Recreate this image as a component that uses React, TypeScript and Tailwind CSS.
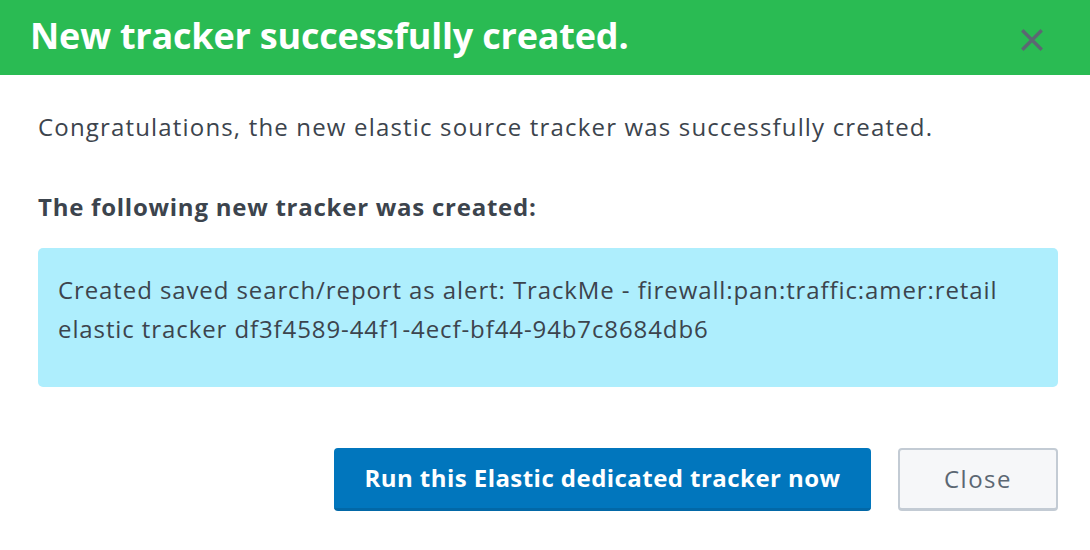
import React from "react";

export default function App() {
  return (
    <div className="w-[1090px] h-[550px] bg-white overflow-hidden" style={{ fontFamily: "'Open Sans', sans-serif" }}>
      <div className="h-[75px] bg-[#2abb53] flex items-center justify-between pl-[30px] pr-[47px]">
        <h1 className="text-white font-bold text-[36px] leading-none tracking-[-0.2px] mb-[3px]">New tracker successfully created.</h1>
        <svg width="22" height="22" viewBox="0 0 22 22" className="mt-[4px]">
          <path d="M2.5 2.5 L19.5 19.5 M19.5 2.5 L2.5 19.5" stroke="#5c6773" strokeWidth="3.4" strokeLinecap="square" />
        </svg>
      </div>
      <div className="pl-[38px] pr-[32px] text-[#3c444d]">
        <p className="text-[24px] leading-[30px] tracking-[1.17px] mt-[37px]">Congratulations, the new elastic source tracker was successfully created.</p>
        <p className="text-[24px] leading-[30px] tracking-[0.75px] font-bold mt-[50px]">The following new tracker was created:</p>
        <div className="mt-[26px] h-[139px] bg-[#aeeefd] rounded-[5px] px-[20px] pt-[22px] text-[24px] leading-[39px] tracking-[0.9px]">
          Created saved search/report as alert: TrackMe - firewall:pan:traffic:amer:retail elastic tracker df3f4589-44f1-4ecf-bf44-94b7c8684db6
        </div>
        <div className="flex justify-end gap-[27px] mt-[61px]">
          <button className="w-[537px] h-[63px] bg-[#0176bd] border-b-[3px] border-[#0268a7] rounded-[4px] text-white font-bold text-[24px] tracking-[0.45px]">
            Run this Elastic dedicated tracker now
          </button>
          <button className="w-[160px] h-[63px] bg-[#f6f7f9] border-2 border-b-[3px] border-[#c3cbd4] rounded-[4px] text-[#5c6773] text-[24px] tracking-[1.5px]">
            Close
          </button>
        </div>
      </div>
    </div>
  );
}
